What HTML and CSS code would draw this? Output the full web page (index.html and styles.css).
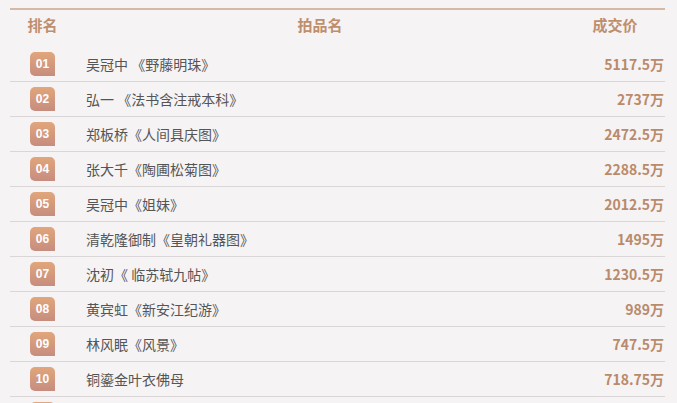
FILE: index.html
```html
<!DOCTYPE html>
<html lang="zh-CN">
<head>
<meta charset="utf-8">
<link rel="stylesheet" href="styles.css">
</head>
<body>
<div class="board">
  <div class="head">
    <div class="c-rank">排名</div>
    <div class="c-name">拍品名</div>
    <div class="c-price">成交价</div>
  </div>
  <div class="list">
    <div class="row"><div class="c-rank"><span class="badge">01</span></div><div class="c-name">吴冠中 《野藤明珠》</div><div class="c-price">5117.5万</div></div>
    <div class="row"><div class="c-rank"><span class="badge">02</span></div><div class="c-name">弘一 《法书含注戒本科》</div><div class="c-price">2737万</div></div>
    <div class="row"><div class="c-rank"><span class="badge">03</span></div><div class="c-name">郑板桥《人间具庆图》</div><div class="c-price">2472.5万</div></div>
    <div class="row"><div class="c-rank"><span class="badge">04</span></div><div class="c-name">张大千《陶圃松菊图》</div><div class="c-price">2288.5万</div></div>
    <div class="row"><div class="c-rank"><span class="badge">05</span></div><div class="c-name">吴冠中《姐妹》</div><div class="c-price">2012.5万</div></div>
    <div class="row"><div class="c-rank"><span class="badge">06</span></div><div class="c-name">清乾隆御制《皇朝礼器图》</div><div class="c-price">1495万</div></div>
    <div class="row"><div class="c-rank"><span class="badge">07</span></div><div class="c-name">沈初《 临苏轼九帖》</div><div class="c-price">1230.5万</div></div>
    <div class="row"><div class="c-rank"><span class="badge">08</span></div><div class="c-name">黄宾虹《新安江纪游》</div><div class="c-price">989万</div></div>
    <div class="row"><div class="c-rank"><span class="badge">09</span></div><div class="c-name">林风眠《风景》</div><div class="c-price">747.5万</div></div>
    <div class="row"><div class="c-rank"><span class="badge">10</span></div><div class="c-name">铜鎏金叶衣佛母</div><div class="c-price">718.75万</div></div>
    <div class="row"><div class="c-rank"><span class="badge">11</span></div><div class="c-name">&nbsp;</div><div class="c-price">&nbsp;</div></div>
  </div>
</div>
</body>
</html>
```
FILE: styles.css
```css
html, body {
  margin: 0;
  padding: 0;
  background: #f5f3f4;
  overflow: hidden;
  height: 403px;
}
body {
  font-family: "Noto Sans CJK SC", "Noto Sans", sans-serif;
}
.board {
  margin: 8px 12px 0 10px;
  border-top: 2px solid #d6b9a5;
}
.head {
  display: flex;
  align-items: center;
  height: 28px;
  font-size: 15px;
  font-weight: bold;
  color: #bf8f6d;
}
.head .c-name { text-align: center; }
.head .c-price { text-align: center; }
.c-rank {
  width: 65px;
  flex: none;
  display: flex;
  justify-content: center;
}
.c-name {
  flex: 1;
  padding-left: 11px;
  padding-right: 11px;
}
.c-price {
  width: 100px;
  flex: none;
  text-align: right;
}
.list {
  padding-top: 9px;
}
.row {
  display: flex;
  align-items: center;
  height: 34px;
  border-bottom: 1px solid #dad6d7;
}
.row .c-name {
  font-size: 14px;
  color: #555;
  text-align: left;
}
.row .c-price {
  font-size: 14px;
  font-weight: bold;
  color: #b98a6b;
  padding-right: 1px;
  box-sizing: border-box;
}
.badge {
  display: flex;
  align-items: center;
  justify-content: center;
  width: 25px;
  height: 24px;
  border-radius: 5px 5px 0 5px;
  background: linear-gradient(to bottom, #e1a67b, #c68d7f);
  color: #fff;
  font-size: 12px;
  font-weight: bold;
  font-family: "Liberation Sans", Arial, sans-serif;
}
```
